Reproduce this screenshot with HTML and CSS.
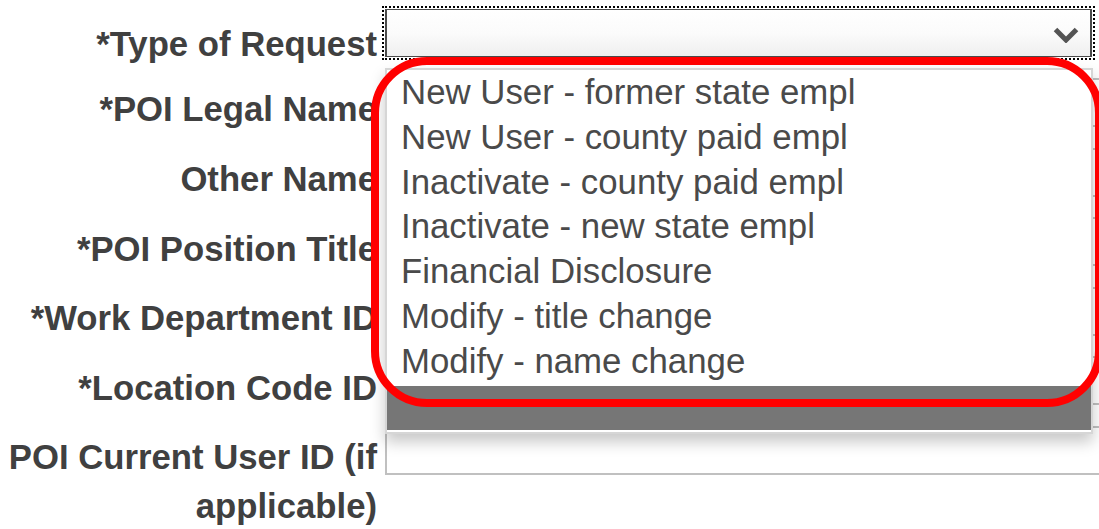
FILE: index.html
```html
<!DOCTYPE html>
<html lang="en">
<head>
<meta charset="utf-8">
<title>Account Request</title>
<link rel="stylesheet" href="styles.css">
</head>
<body>
<form class="request-form">
  <div class="row row-first">
    <label class="label">*Type of Request</label>
    <div class="field">
      <div class="select is-focused">
        <svg class="chevron" viewBox="0 0 28 16" width="28" height="16" aria-hidden="true">
          <polyline points="3.5,2.5 14,13 24.5,2.5" fill="none" stroke="#545454" stroke-width="5"/>
        </svg>
      </div>
    </div>
  </div>
  <div class="row">
    <label class="label">*POI Legal Name</label>
    <div class="field"><input class="text-input" type="text"></div>
  </div>
  <div class="row">
    <label class="label">Other Name</label>
    <div class="field"><input class="text-input" type="text"></div>
  </div>
  <div class="row">
    <label class="label">*POI Position Title</label>
    <div class="field"><input class="text-input" type="text"></div>
  </div>
  <div class="row">
    <label class="label">*Work Department ID</label>
    <div class="field"><input class="text-input" type="text"></div>
  </div>
  <div class="row">
    <label class="label">*Location Code ID</label>
    <div class="field"><input class="text-input" type="text"></div>
  </div>
  <div class="row">
    <label class="label">POI Current User ID (if applicable)</label>
    <div class="field"><input class="text-input" type="text"></div>
  </div>
</form>

<ul class="option-list">
  <li class="option">New User - former state empl</li>
  <li class="option">New User - county paid empl</li>
  <li class="option">Inactivate - county paid empl</li>
  <li class="option">Inactivate - new state empl</li>
  <li class="option">Financial Disclosure</li>
  <li class="option">Modify - title change</li>
  <li class="option">Modify - name change</li>
  <li class="option option-active"></li>
</ul>

<div class="callout-ring"></div>
</body>
</html>
```

FILE: styles.css
```css
html, body {
  margin: 0;
  padding: 0;
  overflow: hidden;
  background: #ffffff;
}

body {
  position: relative;
  width: 1099px;
  height: 529px;
  font-family: "Liberation Sans", Arial, sans-serif;
}

/* form grid: right-aligned labels, fields to the right */
.request-form {
  padding-top: 9px;
}

.row {
  display: flex;
  height: 69.6px;
}

.row-first {
  height: 69px;
}

.label {
  flex: 0 0 377px;
  box-sizing: border-box;
  padding-top: 7.4px;
  text-align: right;
  font-weight: bold;
  font-size: 34.7px;
  line-height: 49px;
  color: #404040;
}

.row-first .label {
  padding-top: 11px;
}

.field {
  margin-left: 8px;
  flex: 0 0 auto;
}

/* closed select control with keyboard focus ring */
.select {
  box-sizing: border-box;
  width: 707px;
  height: 48px;
  border-style: solid;
  border-color: #4a4a4a;
  border-width: 1px 2px;
  background: linear-gradient(#ffffff 0%, #fbfbfb 50%, #efefef 100%);
  display: flex;
  align-items: center;
  justify-content: flex-end;
  padding: 4px 10px 0 0;
}

.select.is-focused {
  outline: 2px dotted #000000;
  outline-offset: 1px;
}

.chevron {
  display: block;
}

.text-input {
  display: block;
  box-sizing: border-box;
  width: 760px;
  height: 49px;
  margin: 0;
  border: 2px solid #c0c0c0;
  background: #ffffff;
}

/* open options menu of the select */
.option-list {
  position: absolute;
  left: 385px;
  top: 68px;
  width: 708px;
  box-sizing: border-box;
  margin: 0;
  padding: 0 0 2px;
  list-style: none;
  background: #ffffff;
  border: 2px solid #d6d6d6;
  box-shadow: 0 8px 14px rgba(0, 0, 0, 0.22);
}

.option {
  height: 44.8px;
  padding-left: 14px;
  font-size: 34.8px;
  line-height: 44.8px;
  color: #4a4a4a;
  white-space: nowrap;
}

.option-active {
  height: 44px;
  margin-top: 2px;
  background: #767676;
}

/* red callout drawn around the open menu */
.callout-ring {
  position: absolute;
  left: 371px;
  top: 57px;
  width: 732px;
  height: 350px;
  box-sizing: border-box;
  border: 8px solid #ff0000;
  border-radius: 56px;
  pointer-events: none;
}
```
